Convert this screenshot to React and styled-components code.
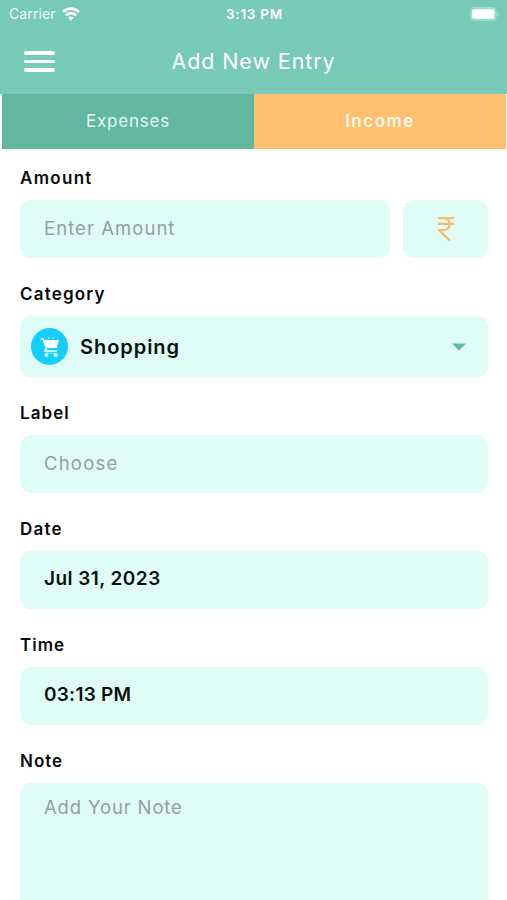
import { useState } from "react";
import styled, { createGlobalStyle } from "styled-components";

const cores = {
  header: "#77CAB7",
  tabGreen: "#61B79F",
  tabOrange: "#FFBF6F",
  field: "#DFFCF6",
  placeholder: "#949F9D",
  cart: "#14CFFD",
};

export default function App() {
  const [tab, setTab] = useState("income");

  return (
    <>
      <GlobalStyle />
      <Screen>
        <Header>
          <StatusBar>
            <Carrier>
              <span>Carrier</span>
              <WifiIcon />
            </Carrier>
            <Clock>3:13 PM</Clock>
            <BatteryIcon />
          </StatusBar>
          <NavBar>
            <MenuButton aria-label="Menu">
              <i /><i /><i />
            </MenuButton>
            <Title>Add New Entry</Title>
          </NavBar>
        </Header>
        <Tabs>
          <Tab $bg={cores.tabGreen} $active={tab === "expenses"} $spacing="0.8px" onClick={() => setTab("expenses")}>Expenses</Tab>
          <Tab $bg={cores.tabOrange} $active={tab === "income"} $spacing="1.5px" onClick={() => setTab("income")}>Income</Tab>
        </Tabs>
        <Form>
          <Field>
            <Label $spacing="1.3px">Amount</Label>
            <AmountRow>
              <Box><Placeholder $spacing="1.05px">Enter Amount</Placeholder></Box>
              <Currency><RupeeIcon /></Currency>
            </AmountRow>
          </Field>
          <Field>
            <Label $spacing="1.2px">Category</Label>
            <CategoryBox>
              <CartCircle><CartIcon /></CartCircle>
              <Value $size="20px" $spacing="0.95px">Shopping</Value>
              <Caret />
            </CategoryBox>
          </Field>
          <Field>
            <Label $spacing="1.05px">Label</Label>
            <Box><Placeholder $spacing="1.2px">Choose</Placeholder></Box>
          </Field>
          <Field>
            <Label $spacing="1.2px">Date</Label>
            <Box><Value $spacing="0.45px">Jul 31, 2023</Value></Box>
          </Field>
          <Field>
            <Label $spacing="1px">Time</Label>
            <Box><Value $spacing="0.25px">03:13 PM</Value></Box>
          </Field>
          <Field>
            <Label $spacing="1px">Note</Label>
            <NoteBox><Placeholder $spacing="0.85px">Add Your Note</Placeholder></NoteBox>
          </Field>
        </Form>
      </Screen>
    </>
  );
}

function WifiIcon() {
  return (
    <svg width="18" height="14" viewBox="0 0 18 14" fill="none" stroke="#fff" strokeWidth="2.7">
      <path d="M1 5C5.6 0.5 12.4 0.5 17 5" />
      <path d="M4 8.3C6.9 5.6 11.1 5.6 14 8.3" />
      <path d="M9 13.6L6 10.5C7.7 9 10.3 9 12 10.5Z" fill="#fff" stroke="none" />
    </svg>
  );
}

function BatteryIcon() {
  return (
    <svg width="30" height="14" viewBox="0 0 30 14">
      <rect x="0.6" y="0.6" width="25.6" height="12.8" rx="3.6" fill="#9ADACB" stroke="#A0DCCE" />
      <rect x="2.2" y="2.2" width="22.2" height="9.6" rx="2" fill="#fff" />
      <path d="M27.6 5C29.4 5.6 29.4 8.4 27.6 9Z" fill="#A9DFD2" />
    </svg>
  );
}

function RupeeIcon() {
  return (
    <svg width="18" height="26" viewBox="0 0 18 26" fill="none" stroke="#F8BE6B" strokeWidth="2.3">
      <path d="M1 2.2H17M1 7.9H17" />
      <path d="M2 2.2H6.5C14.8 2.2 14.8 14.2 6.5 14.2H2.4V14.6L13 24.6" />
    </svg>
  );
}

function CartIcon() {
  return (
    <svg width="20" height="22" viewBox="0 0 20 22" fill="none" stroke="#fff">
      <path d="M0.6 3H3.2L6.6 12.6" strokeWidth="1.6" />
      <path d="M3.6 4H19L16.6 12H6.4Z" fill="#fff" stroke="none" />
      <path d="M6.4 12L4.8 15H17" strokeWidth="1.5" />
      <path d="M8 1.8H10M12.4 1.8H14.4" strokeWidth="1.3" opacity="0.7" />
      <circle cx="6.4" cy="19" r="2" fill="#fff" stroke="none" />
      <circle cx="15.6" cy="19" r="2" fill="#fff" stroke="none" />
      <path d="M6 17.2H16" strokeWidth="0.7" opacity="0.6" />
    </svg>
  );
}

function Caret() {
  return (
    <svg width="14" height="8" viewBox="0 0 14 8">
      <path d="M0 0.4H14L7 7.6Z" fill="#5DB9A0" />
    </svg>
  );
}

const GlobalStyle = createGlobalStyle`
  * {
    box-sizing: border-box;
  }

  body {
    margin: 0;
    background: #FFFFFF;
    overflow: hidden;
    font-family: Inter, "Noto Sans", sans-serif;
  }
`;

const Screen = styled.div`
  width: 100%;
  height: 900px;
  overflow: hidden;
`;

const Header = styled.header`
  height: 94px;
  background: ${cores.header};
  color: #FFFFFF;
`;

const StatusBar = styled.div`
  height: 28px;
  padding: 0 7px 0 9px;
  display: grid;
  grid-template-columns: 1fr auto 1fr;
  align-items: center;

  > svg {
    justify-self: end;
  }
`;

const Carrier = styled.div`
  display: flex;
  align-items: center;
  gap: 6px;
  font-size: 14px;
  line-height: 18px;
  letter-spacing: 0.1px;
  color: #EFFAF7;
`;

const Clock = styled.div`
  font-size: 13.5px;
  font-weight: 600;
  line-height: 18px;
  letter-spacing: 0.75px;
`;

const NavBar = styled.div`
  height: 66px;
  padding: 0 24px;
  display: grid;
  grid-template-columns: 32px 1fr 32px;
  align-items: center;
`;

const MenuButton = styled.button`
  width: 32px;
  padding: 1px 0 0;
  border: 0;
  background: none;
  display: flex;
  flex-direction: column;
  gap: 5px;

  i {
    width: 31px;
    height: 3.6px;
    border-radius: 2px;
    background: #FFFFFF;
  }
`;

const Title = styled.h1`
  margin: 0;
  font-size: 21.5px;
  font-weight: 400;
  line-height: 30px;
  letter-spacing: 0.9px;
  text-align: center;
`;

const Tabs = styled.div`
  height: 55px;
  padding: 0 1px 0 2px;
  display: flex;
`;

const Tab = styled.button`
  flex: 1;
  padding: 0 0 2px;
  border: 0;
  background: ${(props) => props.$bg};
  color: ${(props) => (props.$active ? "#FFF9EF" : "#E4FAF3")};
  font-family: inherit;
  font-size: 17px;
  font-weight: ${(props) => (props.$active ? 600 : 400)};
  letter-spacing: ${(props) => props.$spacing};
`;

const Form = styled.main`
  padding: 17px 19px 0 20px;
  display: flex;
  flex-direction: column;
  gap: 24px;
`;

const Field = styled.section`
  display: flex;
  flex-direction: column;
  gap: 10px;
`;

const Label = styled.label`
  height: 24px;
  line-height: 24px;
  font-size: 17px;
  font-weight: 600;
  color: #0B0B0B;
  letter-spacing: ${(props) => props.$spacing};
`;

const Box = styled.div`
  flex: 1;
  min-height: 58px;
  padding: 0 24px 2px;
  border-radius: 11px;
  background: ${cores.field};
  display: flex;
  align-items: center;
`;

const AmountRow = styled.div`
  display: flex;
  gap: 13px;
`;

const Currency = styled(Box)`
  flex: 0 0 85px;
  padding: 0;
  justify-content: center;
`;

const CategoryBox = styled(Box)`
  min-height: 61px;
  padding: 0 22px 0 11px;
  gap: 12px;

  > svg {
    margin-left: auto;
  }
`;

const CartCircle = styled.div`
  width: 37px;
  height: 37px;
  border-radius: 50%;
  background: ${cores.cart};
  display: flex;
  align-items: center;
  justify-content: center;
`;

const NoteBox = styled(Box)`
  min-height: 140px;
  padding-top: 12px;
  align-items: flex-start;
`;

const Placeholder = styled.span`
  font-size: 18.5px;
  line-height: 24px;
  color: ${cores.placeholder};
  letter-spacing: ${(props) => props.$spacing};
`;

const Value = styled.span`
  font-size: ${(props) => props.$size || "19px"};
  font-weight: 600;
  line-height: 24px;
  color: #07100E;
  letter-spacing: ${(props) => props.$spacing};
`;
